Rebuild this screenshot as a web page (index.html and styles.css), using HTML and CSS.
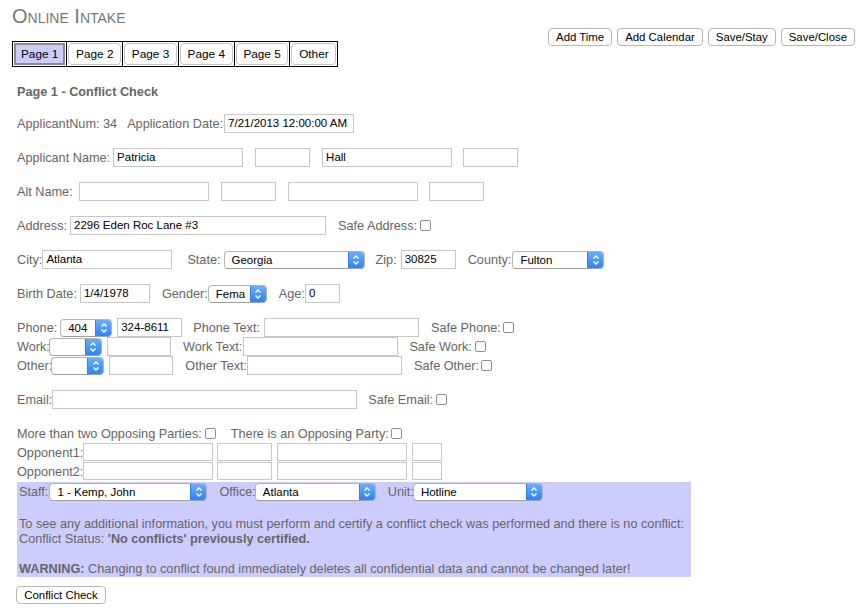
FILE: index.html
```html
<!DOCTYPE html>
<html>
<head>
<meta charset="utf-8">
<title>Online Intake</title>
<link rel="stylesheet" href="styles.css">
</head>
<body>
<div class="page">
  <div class="header">
    <div class="header-left">
      <h1 class="title">Online Intake</h1>
      <table class="tabs">
        <tr>
          <td><button class="tab active">Page 1</button></td>
          <td><button class="tab">Page 2</button></td>
          <td><button class="tab">Page 3</button></td>
          <td><button class="tab">Page 4</button></td>
          <td><button class="tab">Page 5</button></td>
          <td><button class="tab">Other</button></td>
        </tr>
      </table>
    </div>
    <div class="toolbar">
      <button class="btn">Add Time</button>
      <button class="btn">Add Calendar</button>
      <button class="btn">Save/Stay</button>
      <button class="btn">Save/Close</button>
    </div>
  </div>

  <div class="form">
    <div class="heading">Page 1 - Conflict Check</div>

    <div class="row first">
      <span class="lbl">ApplicantNum: 34</span>
      <span class="lbl g10">Application Date:</span>
      <span class="inp w130 g1">7/21/2013 12:00:00 AM</span>
    </div>

    <div class="row">
      <span class="lbl">Applicant Name:</span>
      <span class="inp w130 g3">Patricia</span>
      <span class="inp w55 g12"></span>
      <span class="inp w130 g12">Hall</span>
      <span class="inp w55 g11"></span>
    </div>

    <div class="row">
      <span class="lbl">Alt Name:</span>
      <span class="inp w130 g6"></span>
      <span class="inp w55 g12"></span>
      <span class="inp w130 g12"></span>
      <span class="inp w55 g11"></span>
    </div>

    <div class="row">
      <span class="lbl">Address:</span>
      <span class="inp w256 g3">2296 Eden Roc Lane #3</span>
      <span class="lbl g12">Safe Address:</span>
      <input type="checkbox" class="cb g3">
    </div>

    <div class="row">
      <span class="lbl">City:</span>
      <span class="inp w130">Atlanta</span>
      <span class="lbl g15">State:</span>
      <span class="sel w141 g3"><span class="val">Georgia</span><span class="arr"><svg viewBox="0 0 14 16" width="14" height="16"><path d="M4.5 6.5 L7 4 L9.5 6.5 M4.5 9.5 L7 12 L9.5 9.5" fill="none" stroke="#fff" stroke-width="1.4"/></svg></span></span>
      <span class="lbl g11">Zip:</span>
      <span class="inp w55 g4">30825</span>
      <span class="lbl g12">County:</span>
      <span class="sel w92 g1"><span class="val">Fulton</span><span class="arr"><svg viewBox="0 0 14 16" width="14" height="16"><path d="M4.5 6.5 L7 4 L9.5 6.5 M4.5 9.5 L7 12 L9.5 9.5" fill="none" stroke="#fff" stroke-width="1.4"/></svg></span></span>
    </div>

    <div class="row">
      <span class="lbl">Birth Date:</span>
      <span class="inp w70 g3">1/4/1978</span>
      <span class="lbl g12">Gender:</span>
      <span class="sel w59"><span class="val">Fema</span><span class="arr"><svg viewBox="0 0 14 16" width="14" height="16"><path d="M4.5 6.5 L7 4 L9.5 6.5 M4.5 9.5 L7 12 L9.5 9.5" fill="none" stroke="#fff" stroke-width="1.4"/></svg></span></span>
      <span class="lbl g12">Age:</span>
      <span class="inp w35">0</span>
    </div>

    <div class="row">
      <span class="lbl">Phone:</span>
      <span class="sel w52 g3"><span class="val">404</span><span class="arr"><svg viewBox="0 0 14 16" width="14" height="16"><path d="M4.5 6.5 L7 4 L9.5 6.5 M4.5 9.5 L7 12 L9.5 9.5" fill="none" stroke="#fff" stroke-width="1.4"/></svg></span></span>
      <span class="inp w65 g5">324-8611</span>
      <span class="lbl g11">Phone Text:</span>
      <span class="inp w155 g4"></span>
      <span class="lbl g12">Safe Phone:</span>
      <input type="checkbox" class="cb g2">
    </div>
    <div class="row tight">
      <span class="lbl">Work:</span>
      <span class="sel w53 gm1"><span class="val"></span><span class="arr"><svg viewBox="0 0 14 16" width="14" height="16"><path d="M4.5 6.5 L7 4 L9.5 6.5 M4.5 9.5 L7 12 L9.5 9.5" fill="none" stroke="#fff" stroke-width="1.4"/></svg></span></span>
      <span class="inp w64 g5"></span>
      <span class="lbl g12">Work Text:</span>
      <span class="inp w155 g1"></span>
      <span class="lbl g11">Safe Work:</span>
      <input type="checkbox" class="cb g3">
    </div>
    <div class="row tight">
      <span class="lbl">Other:</span>
      <span class="sel w53 gm1"><span class="val"></span><span class="arr"><svg viewBox="0 0 14 16" width="14" height="16"><path d="M4.5 6.5 L7 4 L9.5 6.5 M4.5 9.5 L7 12 L9.5 9.5" fill="none" stroke="#fff" stroke-width="1.4"/></svg></span></span>
      <span class="inp w64 g5"></span>
      <span class="lbl g12">Other Text:</span>
      <span class="inp w155"></span>
      <span class="lbl g12">Safe Other:</span>
      <input type="checkbox" class="cb g2">
    </div>

    <div class="row">
      <span class="lbl">Email:</span>
      <span class="inp w305"></span>
      <span class="lbl g11">Safe Email:</span>
      <input type="checkbox" class="cb g3">
    </div>

    <div class="row">
      <span class="lbl">More than two Opposing Parties:</span>
      <input type="checkbox" class="cb g3">
      <span class="lbl g15">There is an Opposing Party:</span>
      <input type="checkbox" class="cb g2">
    </div>
    <div class="row tight opp">
      <span class="lbl">Opponent1:</span>
      <span class="inp w130"></span>
      <span class="inp w55 g4"></span>
      <span class="inp w130 g5"></span>
      <span class="inp w30 g5"></span>
    </div>
    <div class="row tight opp">
      <span class="lbl">Opponent2:</span>
      <span class="inp w130"></span>
      <span class="inp w55 g4"></span>
      <span class="inp w130 g5"></span>
      <span class="inp w30 g5"></span>
    </div>

    <div class="conflict">
      <div class="row staff">
        <span class="lbl">Staff:</span>
        <span class="sel w158 g1"><span class="val">1 - Kemp, John</span><span class="arr"><svg viewBox="0 0 14 16" width="14" height="16"><path d="M4.5 6.5 L7 4 L9.5 6.5 M4.5 9.5 L7 12 L9.5 9.5" fill="none" stroke="#fff" stroke-width="1.4"/></svg></span></span>
        <span class="lbl g12">Office:</span>
        <span class="sel w121 gm1"><span class="val">Atlanta</span><span class="arr"><svg viewBox="0 0 14 16" width="14" height="16"><path d="M4.5 6.5 L7 4 L9.5 6.5 M4.5 9.5 L7 12 L9.5 9.5" fill="none" stroke="#fff" stroke-width="1.4"/></svg></span></span>
        <span class="lbl g12">Unit:</span>
        <span class="sel w130 gm1"><span class="val">Hotline</span><span class="arr"><svg viewBox="0 0 14 16" width="14" height="16"><path d="M4.5 6.5 L7 4 L9.5 6.5 M4.5 9.5 L7 12 L9.5 9.5" fill="none" stroke="#fff" stroke-width="1.4"/></svg></span></span>
      </div>
      <p class="msg">To see any additional information, you must perform and certify a conflict check was performed and there is no conflict:<br>Conflict Status: <b>'No conflicts' previously certified.</b><br><br><b>WARNING:</b> Changing to conflict found immediately deletes all confidential data and cannot be changed later!</p>
    </div>

    <button class="btn check">Conflict Check</button>
  </div>
</div>
</body>
</html>
```

FILE: styles.css
```css
html, body {
  margin: 0;
  padding: 0;
  background: #fff;
}
body {
  font-family: "Liberation Sans", Arial, Helvetica, sans-serif;
  font-size: 12.7px;
  color: #666;
}
.page {
  padding: 6px 13px 0 12px;
}
.header {
  display: flex;
  justify-content: space-between;
  align-items: center;
}
.title {
  margin: 0;
  font-size: 20px;
  line-height: 20px;
  font-weight: normal;
  font-variant: small-caps;
  color: #777;
}
.tabs {
  margin-top: 15px;
  border-collapse: collapse;
  border: 1px solid #000;
}
.tabs td {
  border: 1px solid #000;
  padding: 1px 1px;
}
.tab {
  display: block;
  height: 22px;
  padding: 0 6.7px;
  margin: 0;
  font-family: "Liberation Sans", Arial, sans-serif;
  font-size: 11.8px;
  color: #000;
  background: #fff;
  border: 1px solid #c4c4c4;
  border-radius: 4px;
}
.tab.active {
  background: #ccccff;
  border: 2px solid #8c8c8c;
  border-radius: 0;
  padding: 0 5px;
}
.toolbar {
  display: flex;
  gap: 5px;
}
.btn {
  height: 18px;
  padding: 0 7px;
  margin: 0;
  font-family: "Liberation Sans", Arial, sans-serif;
  font-size: 11.4px;
  color: #000;
  background: #fff;
  border: 1px solid #b8b8b8;
  border-radius: 4px;
  line-height: 16px;
}
.form {
  margin-left: 5px;
}
.heading {
  margin-top: 18px;
  font-weight: bold;
  line-height: 14px;
}
.row {
  display: flex;
  align-items: center;
  height: 19px;
  margin-top: 15px;
  white-space: nowrap;
}
.row.first {
  margin-top: 15px;
}
.row.tight {
  margin-top: 0;
}
.lbl {
  line-height: 14px;
}
.inp {
  box-sizing: border-box;
  display: inline-block;
  height: 19px;
  border: 1px solid #c8c8c8;
  background: #fff;
  color: #000;
  font-size: 11.5px;
  line-height: 17px;
  padding: 0 3px;
  overflow: hidden;
}
.opp .inp {
  height: 18px;
  margin-bottom: 1px;
}
.sel {
  box-sizing: border-box;
  display: inline-flex;
  height: 18px;
  border: 1px solid #b5b5b5;
  border-bottom-color: #a0a0a0;
  border-radius: 4px;
  background: #fff;
  color: #000;
  font-size: 11.5px;
  overflow: hidden;
}
.sel .val {
  flex: 1;
  padding-left: 7px;
  line-height: 16px;
  overflow: hidden;
}
.sel .arr {
  width: 15px;
  display: flex;
  align-items: center;
  justify-content: center;
  background: linear-gradient(#6aaefc, #2f83f4);
  border-left: 1px solid #3a7fe0;
}
.sel .arr svg {
  display: block;
}
.cb {
  appearance: none;
  -webkit-appearance: none;
  box-sizing: border-box;
  width: 11px;
  height: 11px;
  margin: 0;
  border: 1px solid #8e8e8e;
  border-radius: 2px;
  background: #fff;
}
.gm1 { margin-left: -1px; }
.g1 { margin-left: 1px; }
.g2 { margin-left: 2px; }
.g3 { margin-left: 3px; }
.g4 { margin-left: 4px; }
.g5 { margin-left: 5px; }
.g6 { margin-left: 6px; }
.g10 { margin-left: 10px; }
.g11 { margin-left: 11px; }
.g12 { margin-left: 12px; }
.g15 { margin-left: 15px; }
.w30 { width: 30px; }
.w35 { width: 35px; }
.w52 { width: 52px; }
.w53 { width: 53px; }
.w55 { width: 55px; }
.w59 { width: 59px; }
.w64 { width: 64px; }
.w65 { width: 65px; }
.w70 { width: 70px; }
.w92 { width: 92px; }
.w121 { width: 121px; }
.w130 { width: 130px; }
.w141 { width: 141px; }
.w155 { width: 155px; }
.w158 { width: 158px; }
.w256 { width: 256px; }
.w305 { width: 305px; }
.conflict {
  width: 674px;
  box-sizing: border-box;
  margin-top: 1px;
  padding: 0 2px;
  background: #ccccff;
}
.conflict .row.staff {
  margin-top: 0;
}
.msg {
  margin: 16px 0 0;
  line-height: 15px;
}
.msg b {
  font-weight: bold;
}
.btn.check {
  display: block;
  margin-top: 9px;
  margin-left: -1px;
  width: 90px;
  padding: 0;
}
```
